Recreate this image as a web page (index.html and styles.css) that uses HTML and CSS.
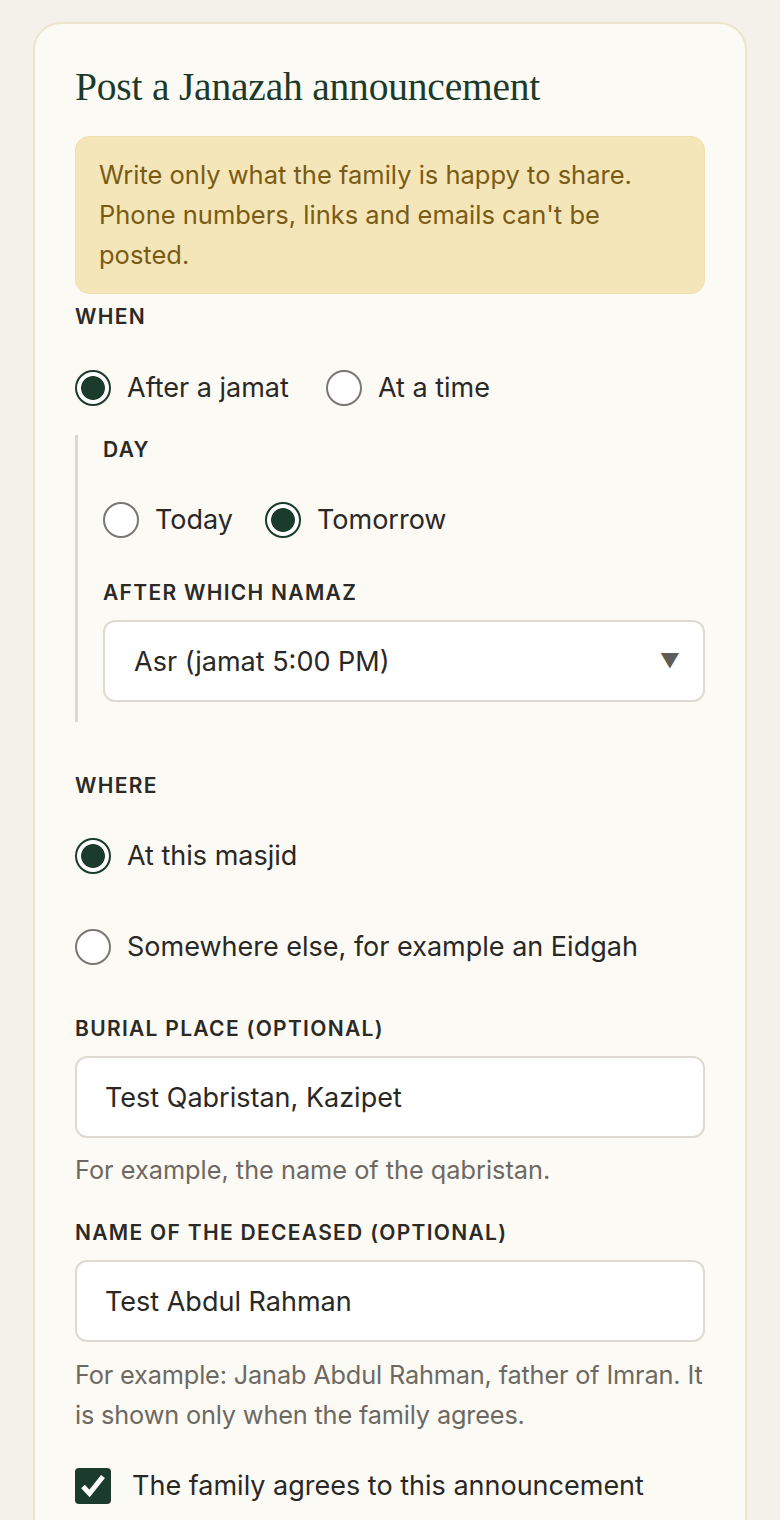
FILE: index.html
```html
<!DOCTYPE html>
<html lang="en">
<head>
<meta charset="utf-8">
<title>Post a Janazah announcement</title>
<link rel="stylesheet" href="styles.css">
</head>
<body>
<main class="card">
  <h1 class="title">Post a Janazah announcement</h1>
  <div class="notice">
    <p>Write only what the family is happy to share. Phone numbers, links and emails can't be posted.</p>
  </div>

  <div class="field-label when-label">When</div>
  <div class="choices choices-when">
    <label class="choice"><input type="radio" name="when" checked><span>After a jamat</span></label>
    <label class="choice"><input type="radio" name="when"><span>At a time</span></label>
  </div>

  <div class="sub">
    <div class="field-label day-label">Day</div>
    <div class="choices choices-day">
      <label class="choice"><input type="radio" name="day"><span>Today</span></label>
      <label class="choice"><input type="radio" name="day" checked><span>Tomorrow</span></label>
    </div>
    <div class="field-label namaz-label">After which namaz</div>
    <div class="select-wrap">
      <select class="select">
        <option>Asr (jamat 5:00 PM)</option>
      </select>
      <span class="select-arrow">▼</span>
    </div>
  </div>

  <div class="field-label where-label">Where</div>
  <div class="stack">
    <label class="choice choice-masjid"><input type="radio" name="where" checked><span>At this masjid</span></label>
    <label class="choice choice-else"><input type="radio" name="where"><span>Somewhere else, for example an Eidgah</span></label>
  </div>

  <div class="field-label burial-label">Burial place (optional)</div>
  <input class="text-input" type="text" value="Test Qabristan, Kazipet">
  <p class="hint hint-burial">For example, the name of the qabristan.</p>

  <div class="field-label name-label">Name of the deceased (optional)</div>
  <input class="text-input" type="text" value="Test Abdul Rahman">
  <p class="hint hint-name">For example: Janab Abdul Rahman, father of Imran. It is shown only when the family agrees.</p>

  <label class="check">
    <input type="checkbox" checked>
    <span class="check-box"><svg viewBox="0 0 36 36" width="36" height="36"><path d="M8 18.5 L14.5 25.5 L28 8.5" fill="none" stroke="#ffffff" stroke-width="5" stroke-linecap="butt" stroke-linejoin="miter"/></svg></span>
    <span class="check-text">The family agrees to this announcement</span>
  </label>
</main>
</body>
</html>
```
FILE: styles.css
```css
* { box-sizing: border-box; }

html, body {
  margin: 0;
  padding: 0;
}

body {
  background: #f4f1ea;
  font-family: "Inter", "Liberation Sans", sans-serif;
  color: #2a2825;
  height: 1520px;
  overflow: hidden;
}

.card {
  margin: 22px 33px 0 33px;
  background: #fcfaf4;
  border: 2px solid #ece4cd;
  border-radius: 28px 28px 0 0;
  padding: 41px 40px 60px 40px;
  min-height: 1600px;
}

.title {
  margin: 0;
  font-family: "Liberation Serif", "DejaVu Serif", serif;
  font-weight: 400;
  font-size: 39.5px;
  line-height: 45px;
  color: #1c3a2c;
  letter-spacing: -0.2px;
}

.notice {
  margin-top: 26px;
  background: #f4e6b9;
  border: 1px solid #efe0b0;
  border-radius: 14px;
  padding: 18px 23px;
}

.notice p {
  margin: 0;
  max-width: 556px;
  font-size: 25.5px;
  line-height: 40px;
  color: #7a5b14;
}

.field-label {
  font-size: 21px;
  line-height: 24px;
  font-weight: 600;
  letter-spacing: 1.3px;
  text-transform: uppercase;
  color: #2b2a26;
}

.when-label { margin-top: 11px; }

.choices {
  display: flex;
  align-items: center;
  gap: 32px;
}

.choices-when {
  margin-top: 41px;
  gap: 37px;
}

.choice {
  display: flex;
  align-items: center;
  gap: 16px;
  font-size: 27px;
  line-height: 36px;
  color: #2a2825;
}

.choice input {
  appearance: none;
  -webkit-appearance: none;
  margin: 0;
  width: 36px;
  height: 36px;
  border-radius: 50%;
  border: 2px solid #7a7873;
  background: #ffffff;
  flex: none;
}

.choice input:checked {
  border: 2.5px solid #1b3b2c;
  background: radial-gradient(circle, #1b3b2c 0 11.5px, #ffffff 12.3px);
}

.sub {
  margin-top: 29px;
  border-left: 3px solid #dcd8d0;
  padding: 3px 0 20px 25px;
}

.choices-day { margin-top: 40px; }

.namaz-label { margin-top: 43px; }

.select-wrap {
  position: relative;
  margin-top: 15px;
}

.select {
  appearance: none;
  -webkit-appearance: none;
  display: block;
  width: 100%;
  height: 82px;
  margin: 0;
  padding: 0 60px 0 29px;
  border: 2px solid #dedad2;
  border-radius: 12px;
  background: #ffffff;
  font-family: "Inter", "Liberation Sans", sans-serif;
  font-size: 27px;
  color: #2a2825;
}

.select-arrow {
  position: absolute;
  right: 25px;
  top: 50%;
  transform: translateY(-50%);
  font-size: 20px;
  line-height: 1;
  color: #5d5d56;
  pointer-events: none;
}

.where-label { margin-top: 52px; }

.stack {
  display: flex;
  flex-direction: column;
}

.choice-masjid { margin-top: 40px; }
.choice-else { margin-top: 55px; }

.burial-label { margin-top: 52px; }

.text-input {
  display: block;
  width: 100%;
  height: 82px;
  margin: 15px 0 0 0;
  padding: 0 28px;
  border: 2px solid #dedad2;
  border-radius: 12px;
  background: #ffffff;
  font-family: "Inter", "Liberation Sans", sans-serif;
  font-size: 27px;
  color: #2a2825;
}

.hint {
  margin: 12px 0 0 0;
  font-size: 25.3px;
  line-height: 40px;
  color: #6d6962;
}

.name-label { margin-top: 31px; }

.hint-name {
  margin-top: 13px;
  letter-spacing: -0.16px;
}

.check {
  margin-top: 33px;
  display: flex;
  align-items: center;
  gap: 21px;
}

.check input {
  display: none;
}

.check-box {
  width: 36px;
  height: 36px;
  flex: none;
  border-radius: 4px;
  background: #1b3b2c;
  display: flex;
  align-items: center;
  justify-content: center;
}

.check-text {
  font-size: 27px;
  line-height: 36px;
  color: #2a2825;
}
```
